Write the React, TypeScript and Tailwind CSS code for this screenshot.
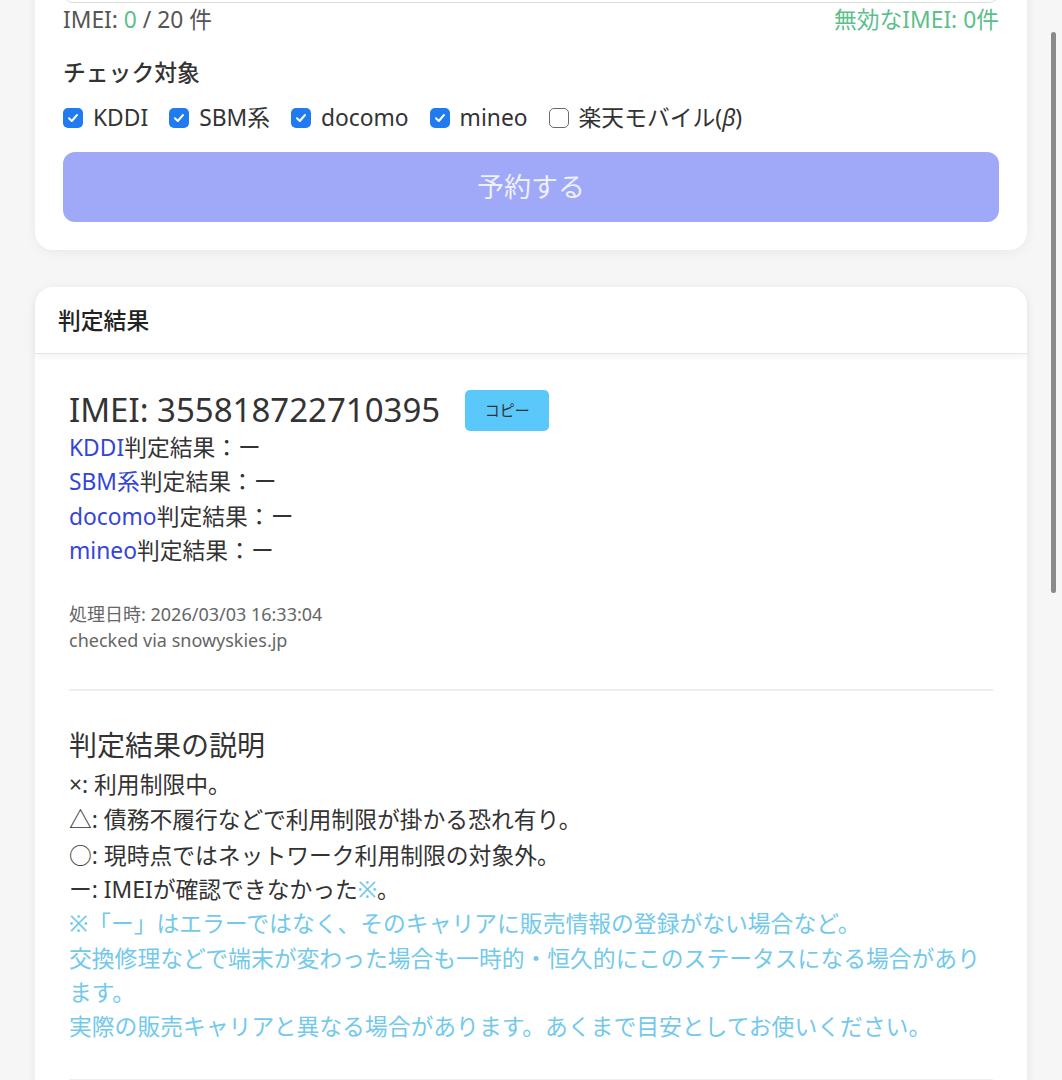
import React from "react";

const FONT = { fontFamily: '"Noto Sans", "Noto Sans CJK JP", sans-serif' };
const CJK = { fontFamily: '"Noto Sans CJK JP", sans-serif' };

function Check({ checked, label }: { checked: boolean; label: React.ReactNode }) {
  return (
    <label className="flex items-center gap-[10px]">
      {checked ? (
        <span className="flex h-[20px] w-[20px] items-center justify-center rounded-[5px] bg-[#1f7bef]">
          <svg width="14" height="14" viewBox="0 0 14 14" fill="none">
            <path d="M3 7.3 L5.8 10 L11 4" stroke="white" strokeWidth="2" strokeLinecap="round" strokeLinejoin="round" />
          </svg>
        </span>
      ) : (
        <span className="h-[20px] w-[20px] rounded-[5px] border-[1.5px] border-[#6b6b6b] bg-white" />
      )}
      <span>{label}</span>
    </label>
  );
}

export default function App() {
  return (
    <div className="relative min-h-[1080px] overflow-hidden bg-[#f6f6f6] text-[#333]" style={FONT}>
      <div className="px-[35px] pb-[40px]">
        {/* Top form card */}
        <div className="-mt-[125px] rounded-[18px] bg-white px-[28px] pb-[28px] pt-[28px] shadow-[0_2px_12px_rgba(0,0,0,0.06)]">
          <div className="h-[100px] rounded-[10px] border border-[#dcdcdc] bg-white" />
          <div className="flex items-center justify-between text-[22.8px] leading-[34px] text-[#555]">
            <span>
              IMEI: <span className="text-[#5cbf8a]">0</span> / 20 件
            </span>
            <span className="text-[#5cbf8a]">無効なIMEI: 0件</span>
          </div>
          <div className="mt-[18px] text-[22.8px] font-medium leading-[34px] text-[#333]" style={CJK}>
            チェック対象
          </div>
          <div className="mt-[12px] flex items-center gap-[21px] text-[22.8px] leading-[34px] text-[#333]">
            <Check checked label="KDDI" />
            <Check checked label="SBM系" />
            <Check checked label="docomo" />
            <Check checked label="mineo" />
            <Check
              checked={false}
              label={
                <>
                  楽天モバイル(<i>β</i>)
                </>
              }
            />
          </div>
          <button className="mt-[17px] flex h-[70px] w-full items-center justify-center rounded-[12px] bg-[#9fa9f8] text-[27px] text-[#eef0ff]">
            予約する
          </button>
        </div>

        {/* Result card */}
        <div className="mt-[37px] rounded-[18px] bg-white shadow-[0_2px_12px_rgba(0,0,0,0.06)]">
          <div
            className="flex h-[67px] items-center rounded-t-[18px] border-b border-[#e6e6e6] px-[23px] text-[22.8px] font-medium text-[#222] shadow-[0_3px_6px_rgba(0,0,0,0.05)]"
            style={CJK}
          >
            判定結果
          </div>
          <div className="px-[34px] pt-[35px]">
            <div className="flex h-[42px] items-center gap-[25px]">
              <span className="text-[33px] leading-[42px] text-[#333]">IMEI: 355818722710395</span>
              <button
                className="flex h-[41px] w-[84px] items-center justify-center rounded-[5px] bg-[#5ac8fa] text-[15px] text-[#333]"
                style={CJK}
              >
                コピー
              </button>
            </div>
            <div className="text-[22.8px] leading-[34.3px]">
              {["KDDI", "SBM系", "docomo", "mineo"].map((c) => (
                <div key={c}>
                  <span className="text-[#3545d6]">{c}</span>判定結果：ー
                </div>
              ))}
            </div>
            <div className="mt-[33px] text-[18px] leading-[26px] text-[#666]">
              <div>処理日時: 2026/03/03 16:33:04</div>
              <div>checked via snowyskies.jp</div>
            </div>
            <div className="mt-[36px] h-[2px] bg-[#eeeeee]" />
            <div className="mt-[37px] text-[28px] leading-[34px] text-[#333]">判定結果の説明</div>
            <div className="mt-[6px] text-[22.8px] leading-[34.3px] text-[#333]">
              <div>×: 利用制限中。</div>
              <div>
                <span style={CJK}>△</span>: 債務不履行などで利用制限が掛かる恐れ有り。
              </div>
              <div>
                <span style={CJK}>○</span>: 現時点ではネットワーク利用制限の対象外。
              </div>
              <div>
                ー: IMEIが確認できなかった<span className="text-[#72c9ec]">※</span>。
              </div>
              <div className="text-[#72c9ec]">
                <div>※「ー」はエラーではなく、そのキャリアに販売情報の登録がない場合など。</div>
                <div>交換修理などで端末が変わった場合も一時的・恒久的にこのステータスになる場合があります。</div>
                <div>実際の販売キャリアと異なる場合があります。あくまで目安としてお使いください。</div>
              </div>
            </div>
            <div className="mt-[34px] h-[2px] bg-[#eeeeee]" />
            <div className="h-[60px]" />
          </div>
        </div>
      </div>
      {/* overlay scroll indicator */}
      <div className="absolute right-[6px] top-[32px] h-[561px] w-[5px] rounded-full bg-[#8a8a8a]" />
    </div>
  );
}
